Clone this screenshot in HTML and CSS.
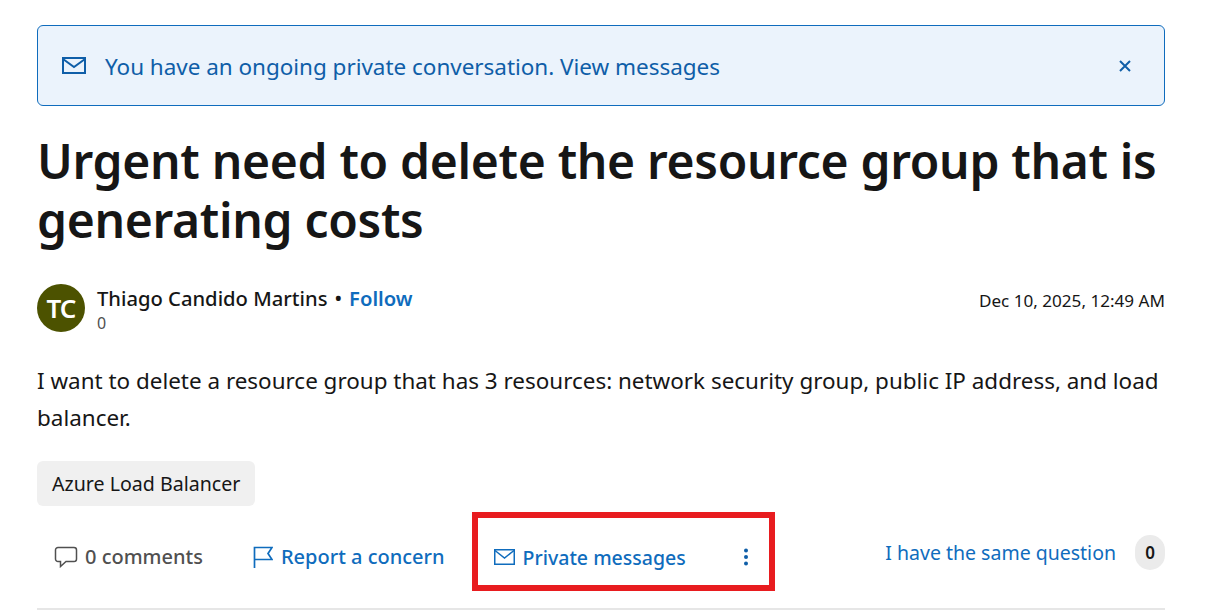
FILE: index.html
```html
<!DOCTYPE html>
<html lang="en">
<head>
<meta charset="utf-8">
<title>Urgent need to delete the resource group that is generating costs</title>
<link rel="stylesheet" href="styles.css">
</head>
<body>
<main class="page">
  <div class="notice">
    <svg class="notice-icon" width="24" height="18" viewBox="0 0 24 18" fill="none" stroke="currentColor" stroke-width="2"><rect x="1" y="1" width="22" height="15"/><path d="M1 2l11 8 11-8"/></svg>
    <span class="notice-text">You have an ongoing private conversation. View messages</span>
    <svg class="notice-close" width="12" height="12" viewBox="0 0 12 12" stroke="currentColor" stroke-width="2" fill="none"><path d="M1 1l10 10M11 1L1 11"/></svg>
  </div>
  <h1 class="title">Urgent need to delete the resource group that is generating costs</h1>
  <div class="byline">
    <div class="avatar">TC</div>
    <div class="author">
      <div class="author-line"><span class="author-name">Thiago Candido Martins</span><span class="dot">•</span><a class="follow">Follow</a></div>
      <div class="rep">0</div>
    </div>
    <div class="date">Dec 10, 2025, 12:49 AM</div>
  </div>
  <p class="body-text">I want to delete a resource group that has 3 resources: network security group, public IP address, and load balancer.</p>
  <div class="tag">Azure Load Balancer</div>
  <div class="actions">
    <a class="action action-muted">
      <svg width="24" height="22" viewBox="0 0 24 22" fill="none" stroke="currentColor" stroke-width="1.5"><path d="M4 1.500h16a2.500 2.500 0 0 1 2.500 2.500v9a2.500 2.500 0 0 1-2.500 2.500H12L6.500 20.500V15.500H4A2.500 2.500 0 0 1 1.500 13V4A2.500 2.500 0 0 1 4 1.500z"/></svg>
      0 comments
    </a>
    <a class="action action-report">
      <svg width="20" height="22" viewBox="0 0 20 22" fill="none" stroke="currentColor" stroke-width="1.7"><path d="M1.500 22V1.500H19l-4 6 4 6H1.500"/></svg>
      Report a concern
    </a>
    <div class="highlight">
      <a class="action action-private">
        <svg width="21" height="16" viewBox="0 0 21 16" fill="none" stroke="currentColor" stroke-width="1.500"><rect x=".75" y=".75" width="19.500" height="14.500"/><path d="M1 1.500l9.500 7.500 9.500-7.500"/></svg>
        Private messages
      </a>
      <svg class="kebab" width="6" height="18" viewBox="0 0 6 18" fill="currentColor"><circle cx="3" cy="2.500" r="2"/><circle cx="3" cy="9" r="2"/><circle cx="3" cy="15.500" r="2"/></svg>
    </div>
    <div class="same">
      <a class="same-link">I have the same question</a>
      <span class="count">0</span>
    </div>
  </div>
</main>
</body>
</html>
```

FILE: styles.css
```css
* { box-sizing: border-box; }
html, body { margin: 0; padding: 0; background: #fff; }
body { font-family: "Noto Sans", "Open Sans", sans-serif; color: #161616; overflow: hidden; }
.page { width: 1128px; margin: 0 0 0 37px; padding-top: 25px; }
.notice { display: flex; align-items: center; height: 81px; padding: 0 33px 0 24px; background: #ebf3fc; border: 1px solid #0f6cbd; border-radius: 6px; color: #0f5ea8; }
.notice-icon { flex: none; }
.notice-text { flex: 1; margin-left: 19px; padding-top: 2px; font-size: 22.5px; letter-spacing: -0.03px; line-height: 30px; }
.notice-close { flex: none; }
.title { margin: 25px 0 0; font-size: 48px; line-height: 59px; font-weight: 600; letter-spacing: -0.32px; }
.byline { display: flex; margin-top: 35px; }
.avatar { flex: none; width: 48px; height: 48px; border-radius: 50%; background: #4c5200; color: #fff; font-size: 26px; font-weight: 600; text-align: center; line-height: 48px; letter-spacing: -1px; }
.author { flex: 1; margin-left: 12px; }
.author-line { font-size: 20.2px; line-height: 28px; font-weight: 500; }
.dot { margin: 0 7px; }
.follow { color: #0f6cbd; font-weight: 600; }
.rep { font-size: 16px; line-height: 22px; color: #505050; }
.date { font-size: 17.1px; line-height: 24px; margin-top: 5px; }
.body-text { margin: 28px 0 0; font-size: 22.45px; line-height: 37px; }
.tag { display: inline-block; margin-top: 25px; padding: 0 15px; height: 45px; line-height: 45px; background: #f0f0f0; border-radius: 6px; font-size: 19.6px; }
.actions { display: flex; align-items: center; margin-top: 6px; border-bottom: 2px solid #e6e6e6; padding-bottom: 17px; }
.action { display: flex; align-items: center; font-size: 20px; font-weight: 500; color: #0f6cbd; }
.action-muted { color: #505050; margin-left: 17px; gap: 7px; margin-top: 10px; }
.action-report { margin-left: 50px; gap: 8px; margin-top: 10px; }
.action-private { gap: 8px; font-size: 19.5px; }
.highlight { display: flex; align-items: center; justify-content: space-between; width: 303px; height: 79px; margin-left: 27px; padding: 11px 20px 0 16px; border: 6px solid #e81c1f; }
.kebab { color: #0f5ea8; }
.same { display: flex; align-items: center; gap: 19px; margin-left: auto; margin-top: 1px; }
.same-link { font-size: 19.5px; color: #0f6cbd; }
.count { width: 30px; height: 35px; border-radius: 15px; background: #ebebeb; font-size: 17px; font-weight: 600; text-align: center; line-height: 35px; }
```
